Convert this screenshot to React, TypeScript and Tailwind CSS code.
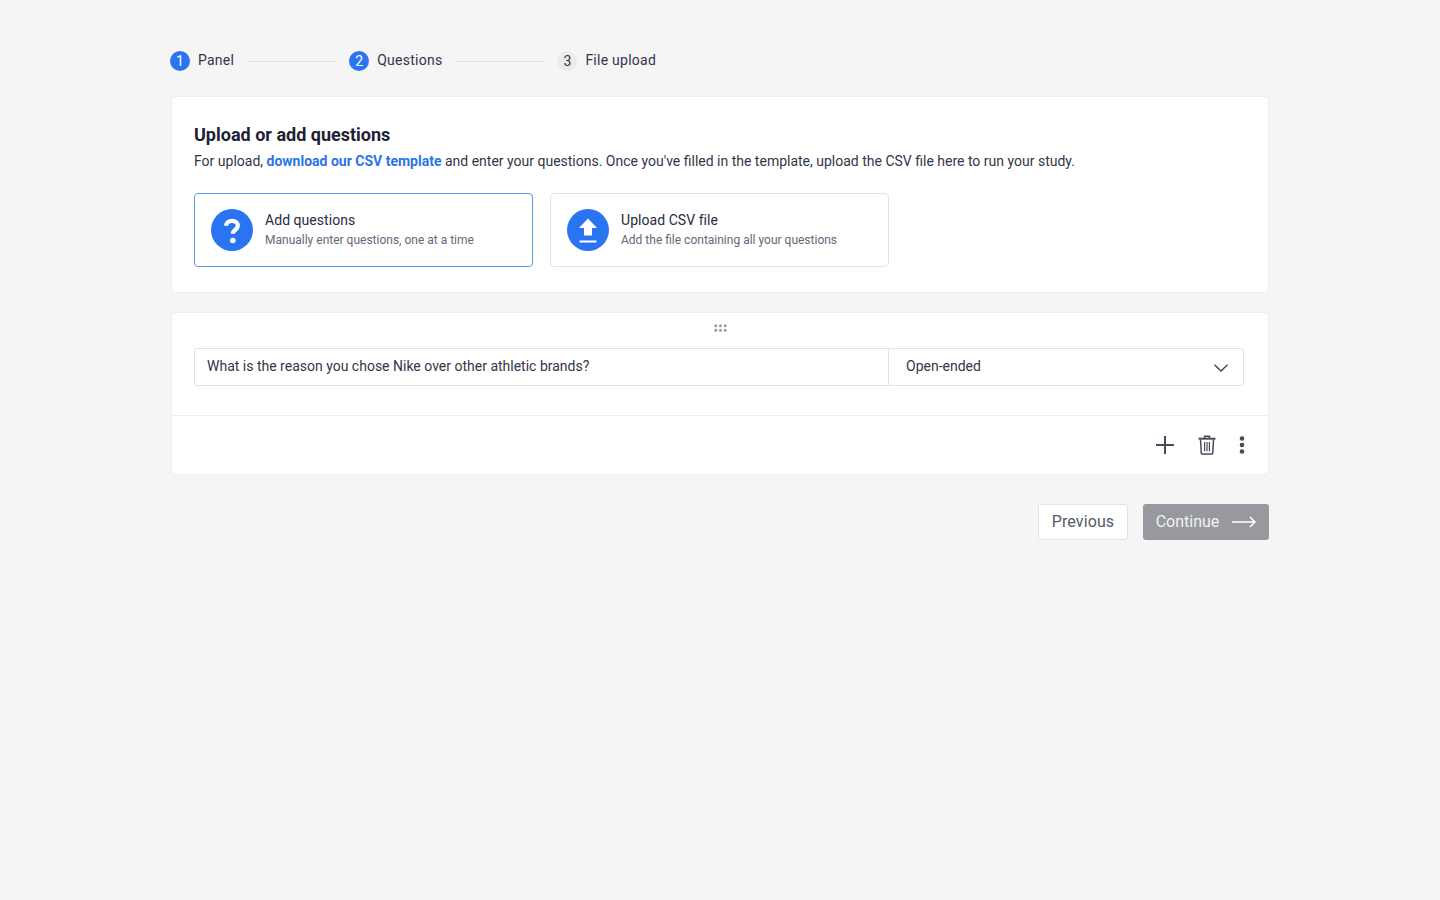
import React from "react";

function Step({ n, label, active }: { n: number; label: string; active: boolean }) {
  return (
    <div className="flex items-center">
      <div className={"flex h-5 w-5 items-center justify-center rounded-full text-[14px] leading-none " + (active ? "bg-[#2b74f1] text-white" : "bg-[#ebebeb] text-[#2f3242]")}>{n}</div>
      <span className="ml-2 -mt-0.5 text-[14px] tracking-[0.25px] leading-5 text-[#33364a]">{label}</span>
    </div>
  );
}

function Line() {
  return <div className="mx-[13.5px] h-px w-[88px] bg-[#dedfe2]" />;
}

function OptionCard({ title, sub, selected, icon }: { title: string; sub: string; selected?: boolean; icon: React.ReactNode }) {
  return (
    <div className={"flex h-[74px] w-[339px] items-center rounded-[4px] border bg-white pl-4 " + (selected ? "border-[#5b98e8]" : "border-[#e2e3e5]")}>
      {icon}
      <div className="ml-3 flex flex-col pb-[2px]">
        <span className="text-[14px] leading-5 tracking-[0.05px] text-[#282b3e]">{title}</span>
        <span className="mt-[1px] text-[12px] leading-[18px] text-[#65677a]">{sub}</span>
      </div>
    </div>
  );
}

export default function App() {
  return (
    <div className="min-h-[900px] bg-[#f5f5f5] pl-[171px] pr-[171px] pt-[51px] font-['Roboto',sans-serif]">
      <div className="-ml-px flex h-5 items-center">
        <Step n={1} label="Panel" active />
        <Line />
        <Step n={2} label="Questions" active />
        <Line />
        <Step n={3} label="File upload" active={false} />
      </div>

      <div className="mt-[25px] h-[197px] rounded-[5px] border border-[#eeeeef] bg-white pl-[22px] pt-[28px]">
        <h1 className="text-[18px] font-bold leading-5 text-[#1e2134]">Upload or add questions</h1>
        <p className="mt-[6px] text-[14px] leading-5 text-[#33364a]">
          For upload, <span className="font-bold text-[#2b74e6]">download our CSV template</span> and enter your questions. Once you've filled in the template, upload the CSV file here to run your study.
        </p>
        <div className="mt-[22px] flex gap-[17px]">
          <OptionCard
            selected
            title="Add questions"
            sub="Manually enter questions, one at a time"
            icon={
              <svg width="42" height="42" viewBox="0 0 42 42" className="shrink-0">
                <circle cx="21" cy="21" r="21" fill="#2b74f1" />
                <path d="M15.2 16.800c0-3.300 2.500-5 5.800-5 3.400 0 5.800 1.900 5.800 4.800 0 2.200-1.200 3.300-2.700 4.400-1.500 1.100-2.300 1.900-2.300 3.800" fill="none" stroke="#fff" strokeWidth="4.200" />
                <circle cx="21.800" cy="31.500" r="2.800" fill="#fff" />
              </svg>
            }
          />
          <OptionCard
            title="Upload CSV file"
            sub="Add the file containing all your questions"
            icon={
              <svg width="42" height="42" viewBox="0 0 42 42" className="shrink-0">
                <circle cx="21" cy="21" r="21" fill="#2b74f1" />
                <path d="M21 9.500l9 9.500h-5v7.500h-8V19h-5z" fill="#fff" />
                <rect x="12.500" y="31.500" width="17" height="2" fill="#fff" />
              </svg>
            }
          />
        </div>
      </div>

      <div className="mt-[19px] rounded-[5px] border border-[#eeeeef] bg-white">
        <div className="flex h-[35px] items-center justify-center pb-[6px]">
          <svg width="13" height="8" viewBox="0 0 13 8" fill="#9a9ba3">
            <circle cx="1.800" cy="1.800" r="1.500" /><circle cx="6.500" cy="1.800" r="1.500" /><circle cx="11.200" cy="1.800" r="1.500" />
            <circle cx="1.800" cy="6.200" r="1.500" /><circle cx="6.500" cy="6.200" r="1.500" /><circle cx="11.200" cy="6.200" r="1.500" />
          </svg>
        </div>
        <div className="ml-[22px] mr-[24px] flex h-[38px] rounded-[3px] border border-[#e2e3e5] text-[14px] text-[#33364a]">
          <div className="flex w-[694px] items-center border-r border-[#e2e3e5] pl-3 pb-[1px]">What is the reason you chose Nike over other athletic brands?</div>
          <div className="flex flex-1 items-center justify-between pl-[17px] pr-[15px] pb-[1px]">
            <span>Open-ended</span>
            <svg width="14" height="8" viewBox="0 0 14 8" fill="none" stroke="#3c3f50" strokeWidth="1.300" className="mt-[3px]"><path d="M.5.8 7 7l6.500-6.200" /></svg>
          </div>
        </div>
        <div className="mt-[29px] flex h-[59px] items-center justify-end border-t border-[#eeeeef] pr-[23px]">
          <svg width="18" height="18" viewBox="0 0 18 18" stroke="#494b5b" strokeWidth="2" className="mr-[24px]"><path d="M9 0v18M0 9h18" /></svg>
          <svg width="18" height="20" viewBox="0 0 18 20" fill="none" stroke="#494b5b" strokeWidth="1.500" className="mr-[23px]">
            <path d="M.5 3.700h17" strokeWidth="2" />
            <path d="M6.500 3V1.200h5V3" />
            <path d="M2.500 4.500 3.300 18.300c0 .5.300.8.800.8h9.800c.5 0 .8-.3.800-.8l.8-13.800" />
            <path d="M6.600 7v9.300M9 7v9.300M11.400 7v9.300" strokeWidth="1.200" />
          </svg>
          <svg width="6" height="18" viewBox="0 0 6 18" fill="#494b5b"><circle cx="3" cy="2.500" r="2.300" /><circle cx="3" cy="9" r="2.300" /><circle cx="3" cy="15.500" r="2.300" /></svg>
        </div>
      </div>

      <div className="mt-[29px] flex justify-end gap-[15px]">
        <button className="h-9 w-[90px] rounded-[3px] border border-[#e2e3e5] bg-white text-[16px] tracking-[0.1px] text-[#56586a]">Previous</button>
        <button className="flex h-9 w-[126px] items-center justify-center rounded-[3px] bg-[#98999f] text-[16px] text-[#f1f1f3]">
          Continue
          <svg width="24" height="12" viewBox="0 0 24 12" fill="none" stroke="#fff" strokeWidth="1.500" className="ml-[13px]"><path d="M0 6h23M18 1l5 5-5 5" /></svg>
        </button>
      </div>
    </div>
  );
}
